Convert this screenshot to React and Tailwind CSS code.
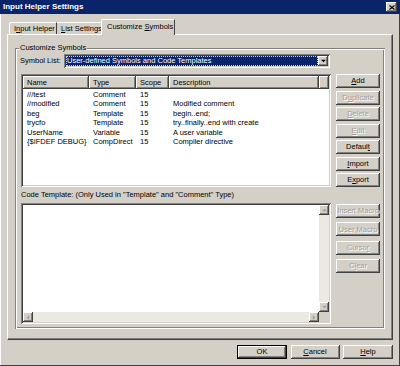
import React from "react";

const RAISED =
  "shadow-[inset_-1px_-1px_0_#404040,inset_1px_1px_0_#ffffff,inset_-2px_-2px_0_#808080]";
const SUNKEN =
  "shadow-[inset_1px_1px_0_#808080,inset_-1px_-1px_0_#ffffff,inset_2px_2px_0_#404040,inset_-2px_-2px_0_#d4d0c8]";
const ETCHED =
  "shadow-[inset_1px_1px_0_#808080,inset_-1px_-1px_0_#ffffff,inset_2px_2px_0_#ffffff,inset_-2px_-2px_0_#808080]";

function Btn({ children, disabled, className = "" }) {
  return (
    <div
      className={`flex items-center justify-center bg-[#d4d0c8] ${RAISED} ${className} ${
        disabled ? "text-[#a0a0a0] [text-shadow:1px_1px_0_#ffffff]" : "text-black"
      }`}
    >
      <span className="whitespace-nowrap">{children}</span>
    </div>
  );
}

function Arrow({ dir, disabled }) {
  const fill = disabled ? "#a0a0a0" : "#000000";
  const pts = {
    up: "1,4 4,1 7,4",
    down: "1,1 7,1 4,4",
    left: "4,1 4,7 1,4",
    right: "1,1 1,7 4,4",
  }[dir];
  const vb = dir === "up" || dir === "down" ? "0 0 8 5" : "0 0 5 8";
  const w = dir === "up" || dir === "down" ? 7 : 4;
  const h = dir === "up" || dir === "down" ? 4 : 7;
  return (
    <svg width={w} height={h} viewBox={vb}>
      <polygon points={pts} fill={fill} />
    </svg>
  );
}

const rows = [
  ["///test", "Comment", "15", ""],
  ["//modified", "Comment", "15", "Modified comment"],
  ["beg", "Template", "15", "begin..end;"],
  ["trycfo", "Template", "15", "try..finally..end with create"],
  ["UserName", "Variable", "15", "A user variable"],
  ["{$IFDEF DEBUG}", "CompDirect", "15", "Compiler directive"],
];

const cols = [
  ["Name", "w-[66px]"],
  ["Type", "w-[47px]"],
  ["Scope", "w-[33px]"],
  ["Description", "w-[150px]"],
  ["", "flex-1"],
];

export default function App() {
  return (
    <div
      className="w-[400px] h-[366px] bg-[#d4d0c8] flex flex-col text-[7.5px] leading-none text-black overflow-hidden relative shadow-[inset_-1px_-1px_0_#404040,inset_1px_1px_0_#ffffff]"
      style={{ fontFamily: '"Liberation Sans", Arial, sans-serif' }}
    >
      {/* Title bar */}
      <div className="h-[14px] bg-[#0a246a] flex items-center pl-[3px] pr-[3px] shrink-0">
        <span className="text-white font-bold text-[8px] flex-1">Input Helper Settings</span>
        <div className={`w-[11px] h-[10px] bg-[#d4d0c8] ${RAISED} flex items-center justify-center`}>
          <svg width="6" height="5" viewBox="0 0 6 5">
            <path d="M0.5 0.5 L5.5 4.5 M5.5 0.5 L0.5 4.5" stroke="#000" strokeWidth="1.1" />
          </svg>
        </div>
      </div>

      {/* Tabs */}
      <div className="flex items-end pl-[9px] mt-[5px] h-[15px] shrink-0 relative z-10">
        <div className="h-[12px] w-[48px] flex items-center pl-[4px] border-l border-t border-white border-r border-r-[#404040] rounded-tl-[2px]">
          <span className="whitespace-nowrap">
            I<span className="underline">n</span>put Helper
          </span>
        </div>
        <div className="h-[12px] w-[45px] flex items-center pl-[4px] border-t border-white border-r border-r-[#404040]">
          <span className="whitespace-nowrap">
            <span className="underline">L</span>ist Settings
          </span>
        </div>
        <div className="h-[16px] w-[74px] -ml-[1px] -mb-[1px] flex items-center pl-[5px] pb-[2px] bg-[#d4d0c8] border-l border-t border-white border-r border-r-[#404040] rounded-tl-[2px]">
          <span className="whitespace-nowrap">
            Customize <span className="underline">S</span>ymbols
          </span>
        </div>
      </div>

      {/* Panel */}
      <div className="ml-[7px] w-[386px] h-[306px] shrink-0 border-l border-t border-white border-r border-b border-r-[#404040] border-b-[#404040] shadow-[inset_-1px_-1px_0_#808080] pt-[13px] pl-[7px]">
        {/* Group box */}
        <div className={`relative w-[370px] h-[281px] ${ETCHED} pt-[6px] pl-[5px]`}>
          <div className="absolute -top-[5px] left-[4px] bg-[#d4d0c8] px-[1px] h-[9px] flex items-center">
            Customize Symbols
          </div>

          {/* Symbol list row */}
          <div className="flex items-center h-[14px]">
            <div className="w-[44px]">Symbol List:</div>
            <div className={`w-[266px] h-[14px] bg-white ${SUNKEN} p-[2px] flex`}>
              <div className="flex-1 bg-[#0a246a] text-white flex items-center pl-[1px] outline outline-1 outline-dotted outline-[#d4d0c8] -outline-offset-1">
                User-defined Symbols and Code Templates
              </div>
              <div className={`w-[10px] bg-[#d4d0c8] ${RAISED} flex items-center justify-center`}>
                <Arrow dir="down" />
              </div>
            </div>
          </div>

          {/* List + buttons */}
          <div className="flex mt-[6px] pl-[1px]">
            <div className={`w-[310px] h-[113px] bg-white ${SUNKEN} p-[2px] flex flex-col`}>
              <div className="flex h-[13px] shrink-0">
                {cols.map(([c, w], i) => (
                  <div
                    key={i}
                    className={`${w} bg-[#d4d0c8] ${RAISED} flex items-center pl-[4px]`}
                  >
                    {c}
                  </div>
                ))}
              </div>
              <div className="flex flex-col pt-[1px]">
                {rows.map((r, i) => (
                  <div key={i} className="flex h-[9.4px] items-center">
                    <div className="w-[66px] pl-[4px] whitespace-nowrap">{r[0]}</div>
                    <div className="w-[47px] pl-[4px]">{r[1]}</div>
                    <div className="w-[33px] pl-[4px]">{r[2]}</div>
                    <div className="w-[150px] pl-[4px] whitespace-nowrap">{r[3]}</div>
                  </div>
                ))}
              </div>
            </div>
            <div className="ml-[5px] w-[44px] flex flex-col gap-[2.5px]">
              <Btn className="h-[14px]"><span className="underline">A</span>dd</Btn>
              <Btn className="h-[14px]" disabled>D<span className="underline">u</span>plicate</Btn>
              <Btn className="h-[14px]" disabled><span className="underline">D</span>elete</Btn>
              <Btn className="h-[14px]" disabled><span className="underline">E</span>dit</Btn>
              <Btn className="h-[14px]">Defaul<span className="underline">t</span></Btn>
              <Btn className="h-[14px]"><span className="underline">I</span>mport</Btn>
              <Btn className="h-[14px]">E<span className="underline">x</span>port</Btn>
            </div>
          </div>

          {/* Code template label */}
          <div className="h-[16px] flex items-center pl-[1px]">
            Code Template: (Only Used in "Template" and "Comment" Type)
          </div>

          {/* Text area + buttons */}
          <div className="flex pl-[1px]">
            <div className={`w-[310px] h-[121px] bg-white ${SUNKEN} p-[2px] flex flex-col`}>
              <div className="flex flex-1">
                <div className="flex-1" />
                <div className="w-[10px] bg-[#ece9e3] flex flex-col justify-between">
                  <div className={`h-[10px] bg-[#d4d0c8] ${RAISED} flex items-center justify-center`}>
                    <Arrow dir="up" disabled />
                  </div>
                  <div className={`h-[10px] bg-[#d4d0c8] ${RAISED} flex items-center justify-center`}>
                    <Arrow dir="down" disabled />
                  </div>
                </div>
              </div>
              <div className="flex h-[10px] shrink-0">
                <div className="flex-1 bg-[#ece9e3] flex justify-between">
                  <div className={`w-[10px] bg-[#d4d0c8] ${RAISED} flex items-center justify-center`}>
                    <Arrow dir="left" disabled />
                  </div>
                  <div className={`w-[10px] bg-[#d4d0c8] ${RAISED} flex items-center justify-center`}>
                    <Arrow dir="right" disabled />
                  </div>
                </div>
                <div className="w-[10px] bg-[#d4d0c8]" />
              </div>
            </div>
            <div className="ml-[5px] w-[44px] flex flex-col gap-[4.3px] pt-[1px]">
              <Btn className="h-[14px]" disabled>Insert Macro</Btn>
              <Btn className="h-[14px]" disabled>User Macro</Btn>
              <Btn className="h-[14px]" disabled>Curso<span className="underline">r</span></Btn>
              <Btn className="h-[14px]" disabled>C<span className="underline">l</span>ear</Btn>
            </div>
          </div>
        </div>
      </div>

      {/* Bottom buttons */}
      <div className="flex justify-end gap-[3.5px] pr-[7px] mt-[5px]">
        <div className="w-[50px] h-[14px] border border-black">
          <Btn className="w-full h-full">OK</Btn>
        </div>
        <Btn className="w-[49px] h-[14px]"><span className="underline">C</span>ancel</Btn>
        <Btn className="w-[50px] h-[14px]"><span className="underline">H</span>elp</Btn>
      </div>
    </div>
  );
}
